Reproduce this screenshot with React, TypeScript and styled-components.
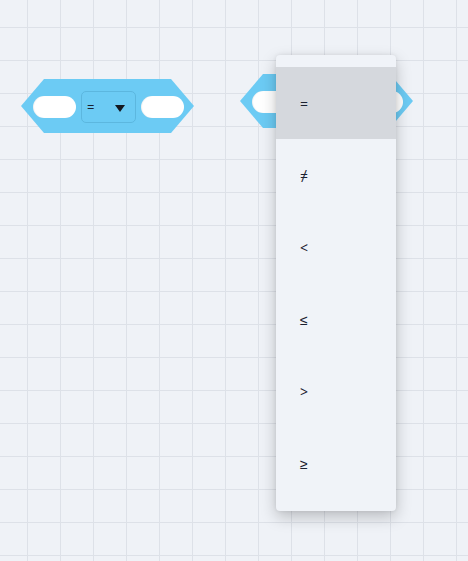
import React from "react";
import styled, { createGlobalStyle } from "styled-components";

const Global = createGlobalStyle`
  html, body { margin: 0; padding: 0; }
  body { background: #eff2f7; font-family: "Noto Sans", "Liberation Sans", sans-serif; }
`;

const Workspace = styled.div`
  position: relative;
  width: 468px;
  height: 561px;
  overflow: hidden;
  background-color: #eff2f7;
  background-image:
    linear-gradient(to right, #dde1e8 1px, transparent 1px),
    linear-gradient(to bottom, #dde1e8 1px, transparent 1px);
  background-size: 33px 33px;
  background-position: 27px 27px;
`;

const Block = styled.div<{ $x: number; $y: number }>`
  position: absolute;
  left: ${(p) => p.$x}px;
  top: ${(p) => p.$y}px;
  width: 173px;
  height: 54px;
  box-sizing: border-box;
  padding: 0 10px 0 12px;
  display: flex;
  align-items: center;
  gap: 5px;
  background: #6ccbf4;
  clip-path: polygon(0 50%, 23px 0, 150px 0, 100% 50%, 150px 100%, 23px 100%);
`;

const Slot = styled.div`
  width: 43px;
  height: 22px;
  margin-top: 2px;
  border-radius: 11px;
  background: #ffffff;
  box-shadow: inset 1px 0 1px rgba(0, 0, 0, 0.06);
`;

const Dropdown = styled.div`
  width: 55px;
  height: 32px;
  margin-top: 2px;
  box-sizing: border-box;
  border: 1px solid #5cb7df;
  border-radius: 5px;
  display: flex;
  align-items: center;
  justify-content: space-between;
  padding: 0 10px 0 5px;
  font-size: 13px;
  color: #1b2130;
`;

const Arrow = styled.span`
  width: 0;
  height: 0;
  border-left: 5.5px solid transparent;
  border-right: 5.5px solid transparent;
  border-top: 7px solid #141820;
  margin-top: 2px;
`;

const Menu = styled.div`
  position: absolute;
  left: 276px;
  top: 55px;
  width: 120px;
  box-sizing: border-box;
  padding: 12px 0;
  background: #f0f3f8;
  border-radius: 4px;
  box-shadow: 0 6px 16px rgba(0, 0, 0, 0.22), 0 0 4px rgba(0, 0, 0, 0.08);
  display: flex;
  flex-direction: column;
`;

const Item = styled.div<{ $active?: boolean }>`
  height: 72px;
  display: flex;
  align-items: center;
  padding-left: 24px;
  font-size: 14px;
  color: #1b2130;
  background: ${(p) => (p.$active ? "#d5d8dd" : "transparent")};
`;

function CompareBlock({ x, y }: { x: number; y: number }) {
  return (
    <Block $x={x} $y={y}>
      <Slot />
      <Dropdown>
        <span>=</span>
        <Arrow />
      </Dropdown>
      <Slot />
    </Block>
  );
}

const ops = ["=", "≠", "<", "≤", ">", "≥"];

export default function App() {
  return (
    <>
      <Global />
      <Workspace>
        <CompareBlock x={21} y={79} />
        <CompareBlock x={240} y={74} />
        <Menu>
          {ops.map((o, i) => (
            <Item key={o} $active={i === 0}>
              {o}
            </Item>
          ))}
        </Menu>
      </Workspace>
    </>
  );
}
